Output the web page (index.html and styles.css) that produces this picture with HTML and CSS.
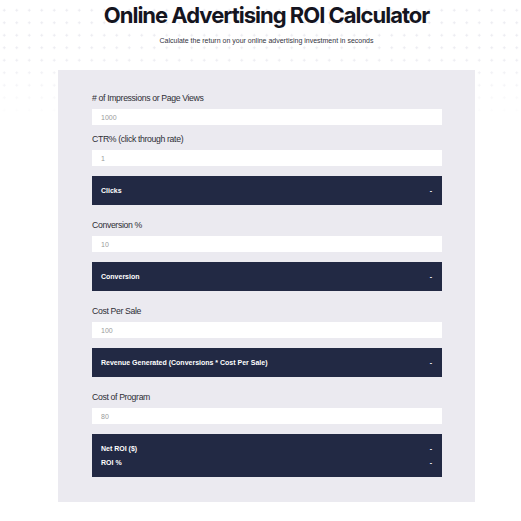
FILE: index.html
```html
<!DOCTYPE html>
<html lang="en">
<head>
    <meta charset="UTF-8">
    <meta name="viewport" content="width=device-width, initial-scale=1.0">
    <title>Online Advertising ROI Calculator</title>
    <link rel="stylesheet" href="styles.css">
</head>
<body>
    <div class="page">
        <h1 class="title">Online Advertising ROI Calculator</h1>
        <p class="subtitle">Calculate the return on your online advertising investment in seconds</p>

        <div class="calculator">
            <label for="impressions">&#35; of Impressions or Page Views</label>
            <input id="impressions" type="text" placeholder="1000">

            <label for="ctr">CTR% (click through rate)</label>
            <input id="ctr" type="text" placeholder="1">

            <div class="result">
                <div class="result-row"><span>Clicks</span><span id="clicks">-</span></div>
            </div>

            <label for="conversion">Conversion %</label>
            <input id="conversion" type="text" placeholder="10">

            <div class="result">
                <div class="result-row"><span>Conversion</span><span id="conversions">-</span></div>
            </div>

            <label for="costPerSale">Cost Per Sale</label>
            <input id="costPerSale" type="text" placeholder="100">

            <div class="result">
                <div class="result-row"><span>Revenue Generated (Conversions * Cost Per Sale)</span><span id="revenue">-</span></div>
            </div>

            <label for="programCost">Cost of Program</label>
            <input id="programCost" type="text" placeholder="80">

            <div class="result result-double">
                <div class="result-row"><span>Net ROI ($)</span><span id="netRoi">-</span></div>
                <div class="result-row"><span>ROI %</span><span id="roiPercent">-</span></div>
            </div>
        </div>
    </div>
</body>
</html>
```

FILE: styles.css
```css
body {
    margin: 0;
    font-family: "Liberation Sans", Arial, sans-serif;
    color: #333;
    background-color: #fff;
    background-image: radial-gradient(circle, #ececf1 1px, transparent 1.2px);
    background-size: 12.5px 12.5px;
    background-position: -2px 4px;
    background-repeat: repeat;
}

/* fades the dotted backdrop out below the header */
.page {
    width: 521px;
    min-height: 521px;
    background: linear-gradient(to bottom, rgba(255,255,255,0) 0, rgba(255,255,255,0) 55px, #fff 120px);
}

.title {
    margin: 0;
    padding: 1px 0 0 12px;
    font-family: Inter, "Liberation Sans", sans-serif;
    font-size: 22px;
    font-weight: 700;
    letter-spacing: -1px;
    line-height: 28px;
    text-align: center;
    color: #15151f;
}

.subtitle {
    margin: 7px 0 0;
    padding-left: 12px;
    font-size: 7px;
    line-height: 9px;
    text-align: center;
    color: #333340;
}

.calculator {
    width: 350px;
    margin: 25px 0 0 58px;
    padding: 22px 33px 25px 34px;
    background-color: #ebeaf0;
    display: flex;
    flex-direction: column;
}

label {
    font-size: 8.7px;
    letter-spacing: -0.35px;
    line-height: 13px;
    color: #2e2e36;
    margin-bottom: 4px;
}

input {
    height: 16px;
    box-sizing: border-box;
    margin: 0 0 8px;
    padding: 0 9px;
    border: none;
    outline: none;
    background-color: #fff;
    font-family: "Liberation Sans", Arial, sans-serif;
    font-size: 7px;
}

input::placeholder {
    color: #9a9a9a;
}

.result {
    margin: 2px 0 14px;
    padding: 0 10px 0 9px;
    height: 29px;
    box-sizing: border-box;
    background-color: #222944;
    color: #fff;
    display: flex;
    flex-direction: column;
    justify-content: center;
    gap: 5px;
}

.result-double {
    height: 43px;
    margin-bottom: 0;
}

.result-row {
    display: flex;
    justify-content: space-between;
    font-size: 7px;
    font-weight: 700;
    line-height: 9px;
}
```
